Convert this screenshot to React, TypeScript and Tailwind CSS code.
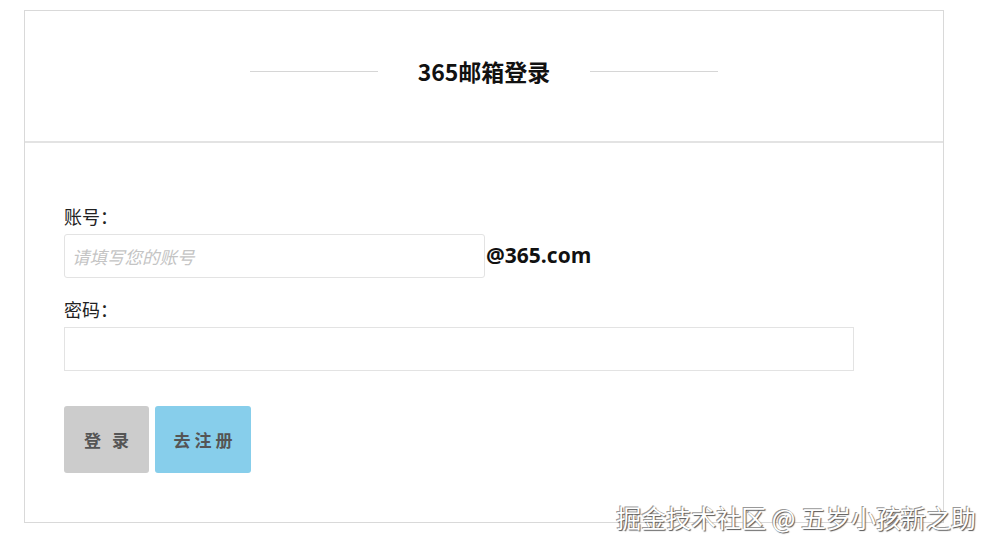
import React from "react";

export default function App() {
    return (
        <div className="relative w-[993px] h-[549px] bg-white overflow-hidden" style={{ fontFamily: '"Noto Sans CJK SC", "Noto Sans", sans-serif' }}>
            <div className="ml-[24px] mt-[10px] w-[920px] h-[513px] border border-[#d9d9d9] flex flex-col">
                {/* header */}
                <div className="h-[132px] pb-[9px] border-b-2 border-[#e3e3e3] flex items-center justify-center">
                    <div className="w-[128px] h-px bg-[#d6d6d6]" />
                    <h1 className="mx-[40px] text-[23px] font-bold text-[#111] leading-none">365邮箱登录</h1>
                    <div className="w-[128px] h-px bg-[#d6d6d6]" />
                </div>
                {/* form */}
                <div className="pl-[39px] pt-[61px]">
                    <label className="block text-[18px] leading-[24px] text-[#222]">账号：</label>
                    <div className="flex items-center mt-[6px]">
                        <input
                            type="text"
                            placeholder="请填写您的账号"
                            className="w-[421px] h-[44px] border border-[#e3e3e3] rounded-[3px] px-[7px] text-[17.5px] italic placeholder:text-[#c4c4c4] outline-none"
                        />
                        <span className="ml-[1px] text-[21px] font-bold text-[#111]" style={{ fontFamily: '"Open Sans", "Noto Sans", sans-serif' }}>@365.com</span>
                    </div>
                    <label className="block mt-[19px] text-[18px] leading-[24px] text-[#222]">密码：</label>
                    <input
                        type="password"
                        className="mt-[6px] w-[790px] h-[44px] border border-[#e3e3e3] outline-none px-[9px]"
                    />
                    <div className="flex gap-[6px] mt-[35px]">
                        <button className="w-[85px] h-[67px] bg-[#cccccc] rounded-[3px] text-[17px] font-bold text-[#555] tracking-[11px] pl-[11px]">登录</button>
                        <button className="w-[96px] h-[67px] bg-[#87ceeb] rounded-[3px] text-[17px] font-bold text-[#555] tracking-[4px] pl-[4px]">去注册</button>
                    </div>
                </div>
            </div>
            <div
                className="absolute right-[17px] top-[500px] text-[25px] leading-[34px] text-white whitespace-nowrap"
                style={{ textShadow: "1px 1px 1px #555, -1px -1px 0 #999" }}
            >
                掘金技术社区 @ 五岁小孩新之助
            </div>
        </div>
    );
}
